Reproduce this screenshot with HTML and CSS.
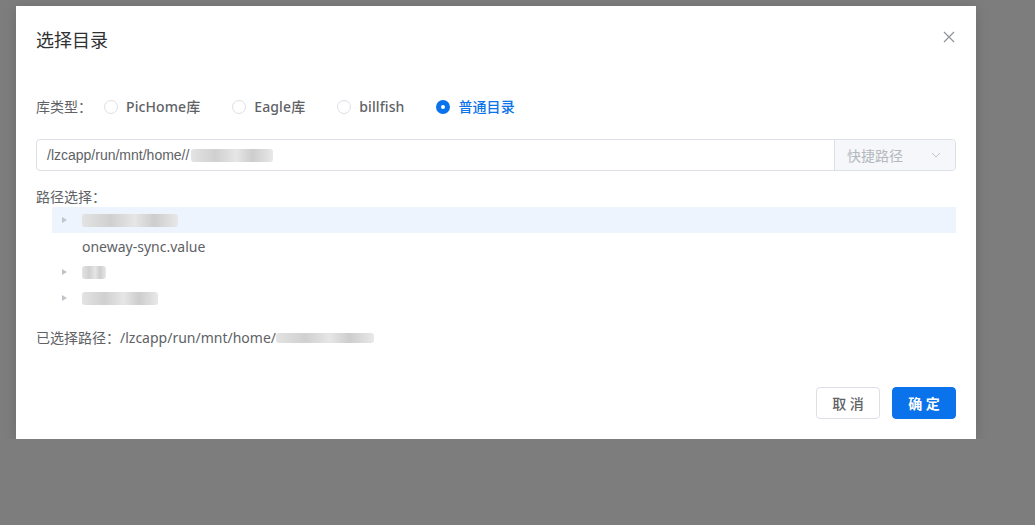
FILE: index.html
```html
<!DOCTYPE html>
<html>
<head>
<meta charset="utf-8">
<title>选择目录</title>
<link rel="stylesheet" href="styles.css">
</head>
<body>
<div class="dialog">
	<div class="dialog-header">
		<span class="dialog-title">选择目录</span>
		<span class="dialog-close">
			<svg width="12" height="12" viewBox="0 0 12 12"><path d="M1 1L11 11M11 1L1 11" stroke="#909399" stroke-width="1.2" fill="none"/></svg>
		</span>
	</div>
	<div class="dialog-body">
		<div class="type-row">
			<span class="type-label">库类型：</span>
			<label class="radio"><span class="radio-dot"></span><span class="radio-text">PicHome库</span></label>
			<label class="radio"><span class="radio-dot"></span><span class="radio-text">Eagle库</span></label>
			<label class="radio"><span class="radio-dot"></span><span class="radio-text">billfish</span></label>
			<label class="radio checked"><span class="radio-dot"></span><span class="radio-text">普通目录</span></label>
		</div>
		<div class="path-input">
			<div class="path-value">/lzcapp/run/mnt/home//<span class="mask mask-input"></span></div>
			<div class="path-append">
				<span>快捷路径</span>
				<svg width="12" height="12" viewBox="0 0 12 12"><path d="M2 4L6 8L10 4" stroke="#c0c4cc" stroke-width="1" fill="none"/></svg>
			</div>
		</div>
		<div class="tree-label">路径选择：</div>
		<div class="tree">
			<div class="tree-node current"><span class="caret"></span><span class="mask" style="width:96px"></span></div>
			<div class="tree-node"><span class="caret empty"></span><span class="node-text">oneway-sync.value</span></div>
			<div class="tree-node"><span class="caret"></span><span class="mask" style="width:24px"></span></div>
			<div class="tree-node"><span class="caret"></span><span class="mask" style="width:76px"></span></div>
		</div>
		<div class="selected">已选择路径：/lzcapp/run/mnt/home/<span class="mask mask-selected"></span></div>
	</div>
	<div class="dialog-footer">
		<button class="btn">取 消</button>
		<button class="btn btn-primary">确 定</button>
	</div>
</div>
</body>
</html>
```

FILE: styles.css
```css
body{
	margin: 0;
	background-color: #7d7d7d;
	font-family: "Noto Sans", "Noto Sans CJK SC", sans-serif;
	color: #606266;
	font-size: 14px;
}
.dialog{
	width: 960px;
	height: 433px;
	margin: 6px 0 0 16px;
	background-color: #fff;
	box-shadow: 0 2px 12px rgba(0,0,0,0.15);
	display: flex;
	flex-direction: column;
}
.dialog-header{
	display: flex;
	justify-content: space-between;
	align-items: center;
	padding: 22px 20px 0;
	height: 24px;
}
.dialog-title{
	font-size: 18px;
	line-height: 24px;
	color: #303133;
}
.dialog-close{
	display: flex;
	margin-right: 1px;
	margin-top: -6px;
}
.dialog-body{
	padding: 45px 20px 0;
	flex: 1;
}
.type-row{
	display: flex;
	align-items: center;
	height: 20px;
	line-height: 20px;
}
.type-label{
	margin-right: 12px;
}
.radio{
	display: flex;
	align-items: center;
	margin-right: 32px;
	font-weight: 500;
	letter-spacing: 0.1px;
	color: #606266;
}
.radio-dot{
	width: 12px;
	height: 12px;
	border: 1px solid #dcdfe6;
	border-radius: 50%;
	margin-right: 8px;
	box-sizing: content-box;
}
.radio.checked .radio-dot{
	width: 4px;
	height: 4px;
	border: 5px solid #0a72ea;
}
.radio.checked .radio-text{
	color: #0a72ea;
}
.path-input{
	display: flex;
	margin-top: 22px;
	height: 30px;
	border: 1px solid #dcdfe6;
	border-radius: 4px;
}
.path-value{
	flex: 1;
	display: flex;
	align-items: center;
	padding-left: 10px;
	font-family: "Liberation Sans", "Noto Sans CJK SC", sans-serif;
	font-size: 14px;
	color: #606266;
}
.path-append{
	width: 95px;
	display: flex;
	align-items: center;
	justify-content: space-between;
	padding: 0 13px 0 12px;
	background-color: #f5f7fa;
	border-left: 1px solid #dcdfe6;
	border-radius: 0 4px 4px 0;
	color: #b4b8bf;
}
.mask{
	display: inline-block;
	height: 13px;
	border-radius: 3px;
	background: linear-gradient(90deg, #e3e3e3, #d0d0d0 30%, #e6e6e6 55%, #cdcdcd 75%, #e8e8e8);
	filter: blur(0.6px);
}
.mask-input{
	width: 82px;
	margin-left: 2px;
}
.tree-label{
	margin-top: 16px;
	line-height: 20px;
}
.tree{
	margin-left: 16px;
}
.tree-node{
	display: flex;
	align-items: center;
	height: 26px;
}
.tree-node.current{
	background-color: #edf4fe;
}
.caret{
	width: 0;
	height: 0;
	margin: 0 15px 0 10px;
	border-top: 3.5px solid transparent;
	border-bottom: 3.5px solid transparent;
	border-left: 5px solid #c0c4cc;
}
.caret.empty{
	border-left-color: transparent;
}
.node-text{
	color: #606266;
}
.selected{
	margin-top: 17px;
	line-height: 20px;
	display: flex;
	align-items: center;
}
.mask-selected{
	width: 98px;
	height: 10px;
}
.dialog-footer{
	display: flex;
	justify-content: flex-end;
	gap: 12px;
	padding: 0 20px 20px;
}
.btn{
	width: 64px;
	height: 32px;
	border: 1px solid #dcdfe6;
	border-radius: 4px;
	background-color: #fff;
	color: #606266;
	font-family: "Noto Sans", "Noto Sans CJK SC", sans-serif;
	font-size: 14px;
	font-weight: 500;
	padding: 0;
}
.btn-primary{
	background-color: #0a72ea;
	border-color: #0a72ea;
	color: #fff;
	font-weight: 700;
}
```
